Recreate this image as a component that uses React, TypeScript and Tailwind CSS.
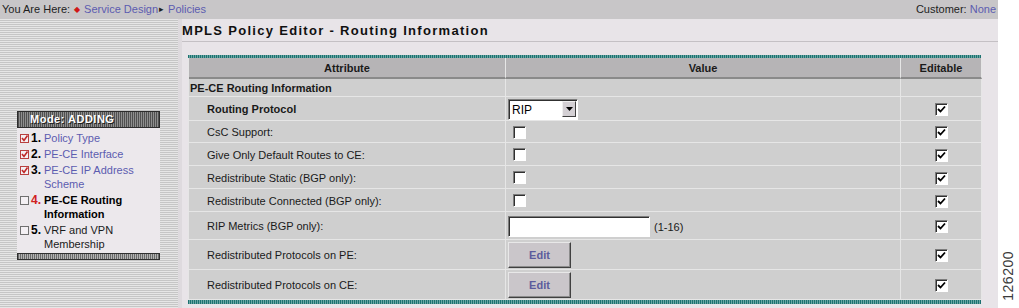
import React from 'react';

const font = "font-['Liberation_Sans',Arial,sans-serif]";

const CheckBox = ({ checked }: { checked?: boolean }) => (
  <span className="inline-flex h-[13px] w-[13px] items-center justify-center border border-t-[#7c7c7c] border-l-[#7c7c7c] border-b-white border-r-white bg-white shadow-[inset_1px_1px_0_#303030]">
    {checked && (
      <svg width="9" height="9" viewBox="0 0 9 9">
        <path d="M1 4 L3.5 6.5 L8 1.5" stroke="#000" strokeWidth="1.8" fill="none" />
      </svg>
    )}
  </span>
);

const StepIcon = ({ done }: { done: boolean }) => (
  <svg width="9" height="9" viewBox="0 0 9 9" className="mt-[3px] shrink-0">
    <rect x="0.5" y="0.5" width="8" height="8" fill="#f4f0f4" stroke={done ? '#b84040' : '#707070'} />
    {done && <path d="M2 4 L4 6.5 L7.5 1.5" stroke="#c02828" strokeWidth="1.6" fill="none" />}
  </svg>
);

interface Step {
  n: number;
  label: string;
  done: boolean;
  current?: boolean;
}

const steps: Step[] = [
  { n: 1, label: 'Policy Type', done: true },
  { n: 2, label: 'PE-CE Interface', done: true },
  { n: 3, label: 'PE-CE IP Address Scheme', done: true },
  { n: 4, label: 'PE-CE Routing Information', done: false, current: true },
  { n: 5, label: 'VRF and VPN Membership', done: false },
];

const EditButton = () => (
  <button
    type="button"
    className="h-[26px] w-[63px] border border-t-[#e8e8e8] border-l-[#e8e8e8] border-b-[#404040] border-r-[#404040] bg-[#cac6ca] text-[11px] font-bold text-[#5c5c9c] shadow-[inset_-1px_-1px_0_#8c8c8c]"
  >
    Edit
  </button>
);

const cell = 'border-b border-r border-[#e6e6e6] flex items-center';

const Row = ({
  label,
  bold,
  height,
  value,
}: {
  label: string;
  bold?: boolean;
  height: string;
  value: React.ReactNode;
}) => (
  <>
    <div className={`${cell} ${height} pl-[18px] pt-[2px] text-[11px] text-[#1a1a1a] ${bold ? 'font-bold' : ''}`}>
      {label}
    </div>
    <div className={`${cell} ${height} pl-[2px] pt-[1px]`}>{value}</div>
    <div className={`${cell} ${height} justify-center pt-[2px]`}>
      <CheckBox checked />
    </div>
  </>
);

export default function App() {
  return (
    <div className={`flex h-[308px] w-[1019px] overflow-hidden bg-white ${font}`}>
      <div className="flex w-[1001px] flex-col">
        <div className="flex h-[19px] items-center justify-between bg-[#c8c6c8] px-[2px] text-[11px] text-[#1e1e1e]">
          <div className="flex items-center">
            <span>You Are Here:</span>
            <span className="mx-[4px] text-[8px] text-[#d01818]">◆</span>
            <span className="text-[#5c5cb0]">Service Design</span>
            <span className="ml-[1px] mr-[4px] text-[9px]">▸</span>
            <span className="text-[#5c5cb0]">Policies</span>
          </div>
          <div>
            Customer: <span className="text-[#5c5cb0]">None</span>
          </div>
        </div>

        <div className="flex flex-1">
          <div className="w-[178px] bg-[repeating-linear-gradient(180deg,#e6e6e6_0_1px,#c6c6c6_1px_2px)] pl-[17px] pt-[92px]">
            <div className="w-[143px]">
              <div className="flex h-[17px] items-center border border-[#2c2c2c] bg-[repeating-linear-gradient(90deg,#505050_0_1px,#8e8e8e_1px_2px)] pl-[12px] text-[11px] font-bold tracking-[0.5px] text-white [text-shadow:1px_1px_0_#202020]">
                Mode: ADDING
              </div>
              <div className="flex flex-col gap-[2px] bg-[#ece8ec] pb-[2px] pl-[3px] pt-[3px] text-[11px] leading-[14px]">
                {steps.map((s) => (
                  <div key={s.n} className="flex">
                    <StepIcon done={s.done} />
                    <span
                      className={`ml-[2px] w-[11px] shrink-0 text-[12px] font-bold ${s.current ? 'text-[#d02020]' : 'text-black'}`}
                    >
                      {s.n}.
                    </span>
                    <span
                      className={`ml-[2px] w-[112px] ${s.current ? 'font-bold text-black' : s.done ? 'text-[#5c5cb0]' : 'text-[#1a1a1a]'}`}
                    >
                      {s.label}
                    </span>
                  </div>
                ))}
              </div>
              <div className="h-[7px] border border-[#303030] bg-[repeating-linear-gradient(90deg,#6a6a6a_0_1px,#b4b4b4_1px_2px)]" />
            </div>
          </div>

          <div className="w-[4px] bg-[#dedade]" />

          <div className="flex flex-1 flex-col bg-[#e8e4e8]">
            <div className="flex h-[23px] items-center border-b border-[#c4c0c4] pt-[2px] text-[13px] font-bold tracking-[1.3px] text-[#101010]">
              MPLS Policy Editor - Routing Information
            </div>

            <div className="ml-[6px] mt-[13px] w-[793px]">
              <div className="h-[3px] bg-[repeating-linear-gradient(90deg,#1c7270_0_1px,#6aa6a4_1px_2px)]" />
              <div className="grid grid-cols-[317px_395px_81px] border-l border-[#e6e6e6] bg-[#cfcfcf]">
                <div className="flex h-[21px] items-center justify-center border-b-2 border-r border-b-[#8a8a8a] border-r-[#e6e6e6] bg-[#b6b4b6] pt-[2px] text-[11px] font-bold text-[#1a1a1a]">
                  Attribute
                </div>
                <div className="flex h-[21px] items-center justify-center border-b-2 border-r border-b-[#8a8a8a] border-r-[#e6e6e6] bg-[#b6b4b6] pt-[2px] text-[11px] font-bold text-[#1a1a1a]">
                  Value
                </div>
                <div className="flex h-[21px] items-center justify-center border-b-2 border-r border-b-[#8a8a8a] border-r-[#e6e6e6] bg-[#b6b4b6] pt-[2px] text-[11px] font-bold text-[#1a1a1a]">
                  Editable
                </div>

                <div className={`${cell} h-[18px] pl-[1px] pt-[1px] text-[11px] font-bold text-[#1a1a1a]`}>
                  PE-CE Routing Information
                </div>
                <div className={`${cell} h-[18px]`} />
                <div className={`${cell} h-[18px]`} />

                <Row
                  label="Routing Protocol"
                  bold
                  height="h-[24px]"
                  value={
                    <div className="flex h-[21px] w-[70px] items-center justify-between border border-t-[#7c7c7c] border-l-[#7c7c7c] border-b-white border-r-white bg-white pl-[3px] text-[12px] text-black shadow-[inset_1px_1px_0_#303030]">
                      <span className="mt-[1px]">RIP</span>
                      <span className="mr-[1px] flex h-[16px] w-[14px] items-center justify-center border border-t-[#f0f0f0] border-l-[#f0f0f0] border-b-[#404040] border-r-[#404040] bg-[#d4d0d4]">
                        <svg width="7" height="4" viewBox="0 0 7 4">
                          <path d="M0 0 H7 L3.5 4 Z" fill="#000" />
                        </svg>
                      </span>
                    </div>
                  }
                />
                <Row label="CsC Support:" height="h-[22px]" value={<span className="ml-[5px] flex"><CheckBox /></span>} />
                <Row
                  label="Give Only Default Routes to CE:"
                  height="h-[23px]"
                  value={<span className="ml-[5px] flex"><CheckBox /></span>}
                />
                <Row
                  label="Redistribute Static (BGP only):"
                  height="h-[23px]"
                  value={<span className="ml-[5px] flex"><CheckBox /></span>}
                />
                <Row
                  label="Redistribute Connected (BGP only):"
                  height="h-[23px]"
                  value={<span className="ml-[5px] flex"><CheckBox /></span>}
                />
                <Row
                  label="RIP Metrics (BGP only):"
                  height="h-[28px]"
                  value={
                    <div className="flex items-center">
                      <span className="h-[21px] w-[142px] border border-t-[#7c7c7c] border-l-[#7c7c7c] border-b-white border-r-white bg-white shadow-[inset_1px_1px_0_#303030]" />
                      <span className="ml-[4px] mt-[3px] text-[11px] text-[#1a1a1a]">(1-16)</span>
                    </div>
                  }
                />
                <Row label="Redistributed Protocols on PE:" height="h-[30px]" value={<EditButton />} />
                <Row label="Redistributed Protocols on CE:" height="h-[30px]" value={<EditButton />} />
              </div>
              <div className="h-[4px] bg-[repeating-linear-gradient(90deg,#1c7270_0_1px,#6aa6a4_1px_2px)]" />
            </div>
          </div>
        </div>
      </div>

      <div className="flex flex-1 flex-col items-center justify-end pb-[7px]">
        <span className="rotate-180 text-[14px] tracking-[0.5px] text-[#3a3a3a] [writing-mode:vertical-rl]">
          126200
        </span>
      </div>
    </div>
  );
}
